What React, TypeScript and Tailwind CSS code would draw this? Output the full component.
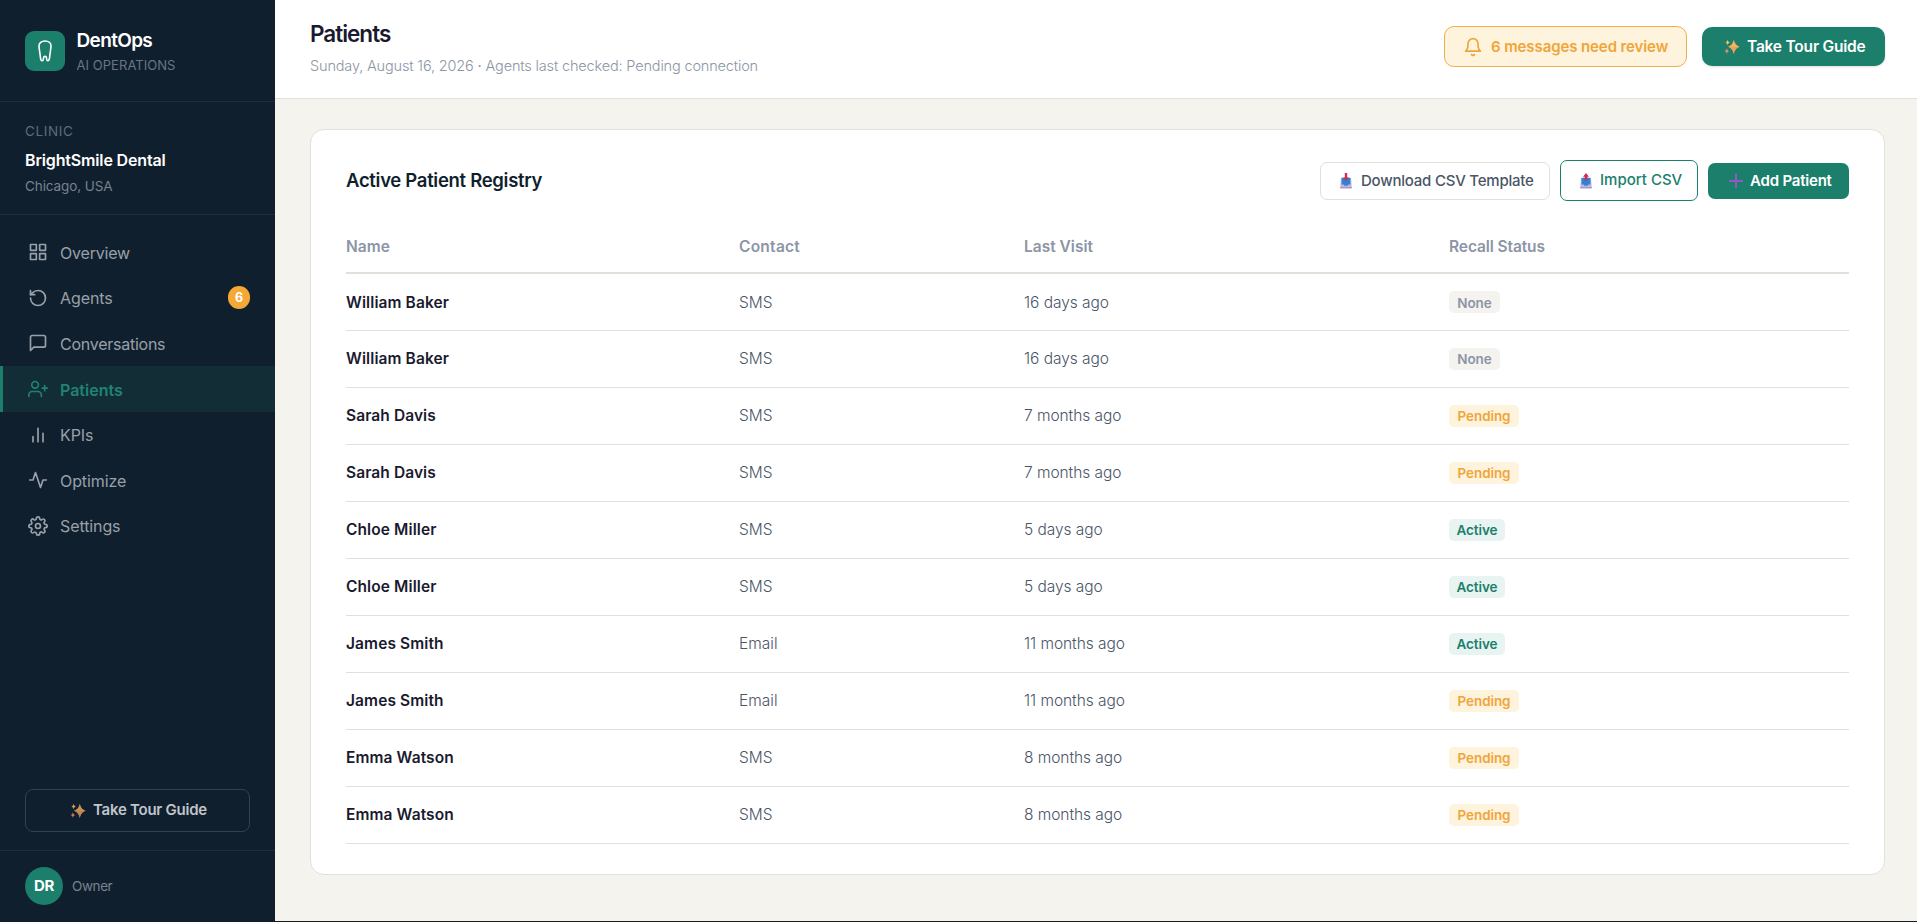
import type { ReactNode } from 'react'

const NAV = [
  { label: 'Overview', icon: 'grid', track: 'tracking-[-0.2px]' },
  { label: 'Agents', icon: 'agents', badge: 6, track: 'tracking-[-0.1px]' },
  { label: 'Conversations', icon: 'chat', track: 'tracking-[-0.25px]' },
  { label: 'Patients', icon: 'patients', active: true, track: 'tracking-[0px]' },
  { label: 'KPIs', icon: 'bars', track: 'tracking-[-0.1px]' },
  { label: 'Optimize', icon: 'activity', track: 'tracking-[-0.1px]' },
  { label: 'Settings', icon: 'settings', track: 'tracking-[-0.1px]' },
]

const PATIENTS = [
  { name: 'William Baker', contact: 'SMS', visit: '16 days ago', status: 'None' },
  { name: 'William Baker', contact: 'SMS', visit: '16 days ago', status: 'None' },
  { name: 'Sarah Davis', contact: 'SMS', visit: '7 months ago', status: 'Pending' },
  { name: 'Sarah Davis', contact: 'SMS', visit: '7 months ago', status: 'Pending' },
  { name: 'Chloe Miller', contact: 'SMS', visit: '5 days ago', status: 'Active' },
  { name: 'Chloe Miller', contact: 'SMS', visit: '5 days ago', status: 'Active' },
  { name: 'James Smith', contact: 'Email', visit: '11 months ago', status: 'Active' },
  { name: 'James Smith', contact: 'Email', visit: '11 months ago', status: 'Pending' },
  { name: 'Emma Watson', contact: 'SMS', visit: '8 months ago', status: 'Pending' },
  { name: 'Emma Watson', contact: 'SMS', visit: '8 months ago', status: 'Pending' },
]

const STATUS: Record<string, string> = {
  None: 'w-[51px] bg-[#f5f3ef] text-[#8c95a6]',
  Pending: 'w-[70px] bg-[#fef3dc] text-[#f0a53a]',
  Active: 'w-[56px] bg-[#e8f4f1] text-[#1b7f6c]',
}

const ICONS: Record<string, ReactNode> = {
  grid: (
    <>
      <rect x="3" y="3" width="7" height="7" />
      <rect x="14" y="3" width="7" height="7" />
      <rect x="14" y="14" width="7" height="7" />
      <rect x="3" y="14" width="7" height="7" />
    </>
  ),
  agents: (
    <>
      <path d="M3 12a9 9 0 1 0 9-9 9.75 9.75 0 0 0-6.74 2.74L3 8" />
      <path d="M3 3v5h5" />
    </>
  ),
  chat: <path d="M21 15a2 2 0 0 1-2 2H7l-4 4V5a2 2 0 0 1 2-2h14a2 2 0 0 1 2 2z" />,
  patients: (
    <>
      <path d="M16 21v-2a4 4 0 0 0-4-4H5a4 4 0 0 0-4 4v2" />
      <circle cx="8.5" cy="7" r="4" />
      <path d="M20 8v6M23 11h-6" />
    </>
  ),
  bars: <path d="M18 20V10M12 20V4M6 20v-6" />,
  activity: <path d="M22 12h-4l-3 9L9 3l-3 9H2" />,
  settings: (
    <>
      <circle cx="12" cy="12" r="3" />
      <path d="M19.4 15a1.65 1.65 0 0 0 .33 1.82l.06.06a2 2 0 1 1-2.83 2.83l-.06-.06a1.65 1.65 0 0 0-2.8 1.17V21a2 2 0 0 1-4 0v-.09A1.65 1.65 0 0 0 9 19.4a1.65 1.65 0 0 0-1.82.33l-.06.06a2 2 0 1 1-2.83-2.83l.06-.06a1.65 1.65 0 0 0-1.17-2.8H3a2 2 0 0 1 0-4h.09A1.65 1.65 0 0 0 4.6 9a1.65 1.65 0 0 0-.33-1.82l-.06-.06a2 2 0 1 1 2.83-2.83l.06.06A1.65 1.65 0 0 0 9 4.6a1.65 1.65 0 0 0 1-1.51V3a2 2 0 0 1 4 0v.09a1.65 1.65 0 0 0 2.8 1.17l.06-.06a2 2 0 1 1 2.83 2.83l-.06.06A1.65 1.65 0 0 0 19.4 9a1.65 1.65 0 0 0 1.51 1H21a2 2 0 0 1 0 4h-.09a1.65 1.65 0 0 0-1.51 1z" />
    </>
  ),
  bell: <path d="M18 8A6 6 0 0 0 6 8c0 7-3 9-3 9h18s-3-2-3-9M13.73 21a2 2 0 0 1-3.46 0" />,
}

function Icon({ name }: { name: string }) {
  return (
    <svg viewBox="0 0 24 24" className="size-5 shrink-0" fill="none" stroke="currentColor" strokeWidth="2" strokeLinecap="round" strokeLinejoin="round">
      {ICONS[name]}
    </svg>
  )
}

function Sparkles() {
  return (
    <svg viewBox="0 0 16 16" className="size-4 shrink-0">
      <path d="M9.8.8c1.1 3.900 2.300 5.600 5.900 7-3.600 1.400-4.800 3.200-5.900 7.200-1.100-4-2.300-5.800-5.900-7.200C7.500 6.400 8.700 4.700 9.800.8z" fill="#f3b45c" />
      <path d="M9.800 15c-1.100-4-2.300-5.800-5.900-7.200h11.800c-3.600 1.400-4.800 3.200-5.900 7.200z" fill="#e8915a" opacity=".55" />
      <path d="M3.600.8c.4 1.700.9 2.300 2.400 2.800-1.500.5-2 1.200-2.400 2.900-.4-1.700-.9-2.400-2.400-2.900 1.500-.5 2-1.100 2.400-2.800z" fill="#f3c063" />
      <path d="M2.900 9.200c.4 1.700.9 2.300 2.400 2.800-1.500.5-2 1.200-2.400 2.900-.4-1.700-.9-2.400-2.400-2.900 1.500-.5 2-1.100 2.400-2.800z" fill="#e88f6c" />
    </svg>
  )
}

function Tray({ up }: { up?: boolean }) {
  return (
    <svg viewBox="0 0 14 16" className="h-4 w-3.5 shrink-0">
      <path d="M2 5h10l.8 10.300H1.200z" fill="#c3b4dc" />
      <path d="M2.600 4.800h8.800v6.700H9.300l-.8 1.300h-3l-.8-1.300H2.600z" fill="#2f83d4" />
      <path d="M1.200 14h11.600v1.300H1.200z" fill="#a796c6" />
      {up ? (
        <path d="M7 0l3 3.700H8.300v3.800H5.700V3.700H4z" fill="#cb2f52" />
      ) : (
        <path d="M5.800 0h2.400v4.500h1.900L7 7.900 3.900 4.500h1.900z" fill="#cb2f52" />
      )}
    </svg>
  )
}

function Sidebar() {
  return (
    <aside className="flex w-[275px] shrink-0 flex-col border-b border-[#1c1c1c] bg-[#101f2e]">
      <div className="flex h-[102px] items-center gap-[11.5px] border-b border-[#1f2d3b] px-[25px]">
        <div className="flex size-10 items-center justify-center rounded-[9px] bg-[#1b7f6c]">
          <svg viewBox="0 0 14 22" className="h-[22px] w-3.5" fill="none" stroke="#fff" strokeWidth="1.6" strokeLinecap="round" strokeLinejoin="round">
            <path d="M7 1C3.4 1 1 3 1 6c0 3 .9 6 1.3 10.5.2 2.8.8 4.3 1.9 4.3 1 0 1.100-1 1.200-2.100.1-1.500.5-2.500 1.600-2.500s1.500 1 1.600 2.500c.1 1.100.2 2.100 1.200 2.100 1.100 0 1.700-1.500 1.900-4.300C12.100 12 13 9 13 6c0-3-2.400-5-6-5z" />
          </svg>
        </div>
        <div className="pt-0.5">
          <div className="text-[19px] leading-[26px] font-semibold tracking-[-0.65px] text-white">DentOps</div>
          <div className="text-[13px] leading-[22px] tracking-[0.05px] text-[#6a7582]">AI OPERATIONS</div>
        </div>
      </div>

      <div className="h-[113px] border-b border-[#1f2d3b] px-[25px] pt-[19px]">
        <div className="text-[13.5px] leading-[21px] tracking-[0.6px] text-[#5f6b78]">CLINIC</div>
        <div className="mt-[5px] text-[16px] leading-[26px] font-semibold tracking-[-0.15px] text-white">BrightSmile Dental</div>
        <div className="mt-0.5 text-[13.5px] leading-[22px] tracking-[-0.1px] text-[#77828e]">Chicago, USA</div>
      </div>

      <nav className="flex flex-col pt-[14.5px]">
        {NAV.map(n => (
          <div
            key={n.label}
            className={`flex h-[45.6px] items-center gap-3 border-l-[3px] pr-[25px] pl-[25px] text-[16px] ${n.track} ${
              n.active ? 'border-[#1b7f6c] bg-[#132d37] font-semibold text-[#1f8471]' : 'border-transparent text-[#98a0a9]'
            }`}
          >
            <Icon name={n.icon} />
            <span className="pt-px">{n.label}</span>
            {n.badge && (
              <span className="ml-auto flex h-[23px] w-[22px] items-center justify-center rounded-full bg-[#f5a836] text-[12.5px] font-bold text-white">
                {n.badge}
              </span>
            )}
          </div>
        ))}
      </nav>

      <div className="mt-auto px-[25px] pb-[18px]">
        <button className="flex h-[43px] w-full items-center justify-center gap-[7px] rounded-lg border border-[#33414e] pl-0.5 text-[15px] font-semibold tracking-[-0.25px] text-[#c0c5cb]">
          <span className="opacity-80"><Sparkles /></span>
          Take Tour Guide
        </button>
      </div>
      <div className="flex h-[71px] items-center gap-[9px] border-t border-[#1f2d3b] px-[25px]">
        <div className="flex size-[38px] items-center justify-center rounded-full bg-[#1b7f6c] text-[15px] font-bold tracking-[-0.3px] text-white">DR</div>
        <span className="text-[13.5px] tracking-[-0.4px] text-[#77828e]">Owner</span>
      </div>
    </aside>
  )
}

function Header() {
  return (
    <header className="flex h-[99px] shrink-0 items-center justify-between border-b border-[#e2e0da] bg-white pr-8 pl-[35px]">
      <div className="pt-0.5">
        <h1 className="text-[22.5px] leading-8 font-semibold tracking-[-1px] text-[#1a1a2e]">Patients</h1>
        <p className="text-[14.5px] leading-8 font-light tracking-[-0.16px] text-[#8c95a6]">
          Sunday, August 16, 2026 <b>·</b> Agents last checked: Pending connection
        </p>
      </div>
      <div className="flex items-center gap-[15px] pb-[5px]">
        <div className="flex h-[41px] w-[243px] items-center gap-2 rounded-[10px] border border-[#f0ae4c] bg-[#fef3dc] pl-[18px] text-[15px] font-semibold tracking-[-0.1px] text-[#f0a53a]">
          <Icon name="bell" />
          <span className="pt-px">6 messages need review</span>
        </div>
        <button className="flex h-[39px] w-[183px] items-center gap-[7px] rounded-[10px] bg-[#1b7f6c] pl-[22px] text-[15.5px] font-semibold tracking-[-0.2px] text-white shadow-sm">
          <Sparkles />
          <span>Take Tour Guide</span>
        </button>
      </div>
    </header>
  )
}

export default function App() {
  return (
    <div className="flex h-[922px] w-full overflow-hidden font-['Inter',sans-serif]">
      <Sidebar />
      <div className="flex min-w-0 flex-1 flex-col border-b border-[#1c1c1c] bg-[#f5f3ee]">
        <Header />
        <main className="flex-1 pt-[30px] pr-8 pl-[35px]">
          <section className="h-[746px] rounded-[14px] border border-[#e2e0da] bg-white px-[35px] pt-[30px]">
            <div className="flex h-[41px] items-center justify-between">
              <h2 className="pt-px text-[18.5px] font-semibold tracking-[-0.3px] text-[#101f2e]">Active Patient Registry</h2>
              <div className="flex items-center gap-2.5">
                <button className="flex h-[38px] w-[230px] items-center gap-2 rounded-[7px] border border-[#e2e0da] pl-[18px] text-[15px] font-medium tracking-[-0.22px] text-[#4a5568]">
                  <Tray />
                  <span className="pt-px">Download CSV Template</span>
                </button>
                <button className="flex h-[41px] w-[138px] items-center gap-[7px] rounded-[7px] border border-[#1b7f6c] pl-[18px] text-[15px] font-medium text-[#1b7f6c]">
                  <Tray up />
                  <span>Import CSV</span>
                </button>
                <button className="flex h-9 w-[141px] items-center gap-[7px] rounded-[7px] bg-[#1b7f6c] pl-[21px] text-[15px] font-semibold tracking-[-0.2px] text-white">
                  <svg viewBox="0 0 14 14" className="size-3.5 shrink-0" fill="none" stroke="#8f59c8" strokeWidth="2">
                    <path d="M7 0v14M0 7h14" />
                  </svg>
                  <span className="pt-px">Add Patient</span>
                </button>
              </div>
            </div>

            <table className="mt-[19px] w-full table-fixed border-collapse text-left text-[15.5px]">
              <colgroup>
                <col className="w-[393px]" />
                <col className="w-[285px]" />
                <col className="w-[425px]" />
                <col />
              </colgroup>
              <thead>
                <tr className="h-[53px] border-b-2 border-[#e2e0da] text-[#8c95a6]">
                  <th className="pt-px font-semibold">Name</th>
                  <th className="pt-px font-semibold tracking-[0.25px]">Contact</th>
                  <th className="pt-px font-semibold">Last Visit</th>
                  <th className="pt-px font-semibold tracking-[-0.1px]">Recall Status</th>
                </tr>
              </thead>
              <tbody>
                {PATIENTS.map((p, i) => (
                  <tr key={i} className="h-[57px] border-b border-[#e0dfdc] text-[#4a5568]">
                    <td className="pt-px font-semibold tracking-[0.1px] text-[#1a1a2e]">{p.name}</td>
                    <td className="pt-px font-light">{p.contact}</td>
                    <td className="pt-px font-light tracking-[-0.05px]">{p.visit}</td>
                    <td>
                      <span className={`flex h-[22px] items-center justify-center rounded-[5px] pt-0.5 text-[13.5px] font-semibold tracking-[-0.1px] ${STATUS[p.status]}`}>
                        {p.status}
                      </span>
                    </td>
                  </tr>
                ))}
              </tbody>
            </table>
          </section>
        </main>
      </div>
    </div>
  )
}
